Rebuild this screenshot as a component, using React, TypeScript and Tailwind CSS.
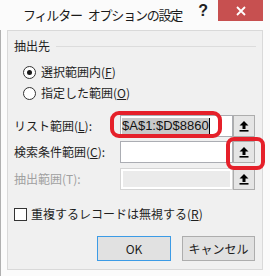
import React from 'react'

const jp = { fontFamily: '"Noto Sans CJK JP", "Noto Sans", sans-serif' }

function UpArrow() {
  return (
    <svg width="10" height="12" viewBox="0 0 10 12">
      <path d="M5 1 L9.5 5.5 L6.5 5.5 L6.5 9 L3.5 9 L3.5 5.5 L0.5 5.5 Z" fill="#000" />
      <rect x="0.5" y="10" width="9" height="1.6" fill="#000" />
    </svg>
  )
}

function RefButton() {
  return (
    <div className="w-[22px] h-[22px] border border-[#adadad] bg-[#e5e5e5] flex items-center justify-center shrink-0">
      <UpArrow />
    </div>
  )
}

function Radio({ checked, children }: { checked?: boolean; children: React.ReactNode }) {
  return (
    <div className="flex items-center h-[16px] pl-[9px]">
      <div className="w-[13px] h-[13px] rounded-full border border-[#333] bg-white flex items-center justify-center shrink-0">
        {checked && <div className="w-[5px] h-[5px] rounded-full bg-[#1a1a1a]" />}
      </div>
      <span className="ml-[5px] text-[12px] leading-[16px] text-[#1e1e1e]">{children}</span>
    </div>
  )
}

export default function App() {
  return (
    <div className="relative w-[270px] h-[276px] bg-[#fbfbfb] overflow-hidden" style={jp}>
      {/* Title bar */}
      <div className="flex items-start h-[30px]">
        <div className="pl-[23px] pt-[7px] flex text-[13px] leading-[16px] tracking-[-1.2px] text-[#1a1a1a]">
          <span>フィルター</span>
          <span className="ml-[6px]">オプションの設定</span>
        </div>
        <div className="ml-auto pt-[2px] mr-[10px] text-[16px] font-bold leading-[18px] text-[#222]" style={{ fontFamily: '"Liberation Sans", sans-serif' }}>
          ?
        </div>
        <div className="w-[45px] h-[21px] bg-[#c75050] mr-[7px] flex items-center justify-center">
          <svg width="10" height="10" viewBox="0 0 10 10">
            <path d="M1 1 L9 9 M9 1 L1 9" stroke="#fff" strokeWidth="1.8" />
          </svg>
        </div>
      </div>

      <div className="border-l border-[#b0b0b0] h-[246px] pl-[6px]">
        {/* Panel */}
        <div className="w-[256px] h-[240px] border border-[#d9d9d9] bg-[#f0f0f0] px-[6px] pt-[7px] flex flex-col text-[12px] text-[#1e1e1e]">
          <div className="flex items-center h-[16px]">
            <span className="leading-[16px]">抽出先</span>
            <div className="flex-1 h-px bg-[#dcdcdc] ml-[6px]" />
          </div>

          <div className="mt-[10px]">
            <Radio checked>
              選択範囲内(<span className="underline">F</span>)
            </Radio>
          </div>
          <div className="mt-[5px]">
            <Radio>
              指定した範囲(<span className="underline">O</span>)
            </Radio>
          </div>

          {/* List range */}
          <div className="mt-[14px] flex items-center h-[22px]">
            <span className="w-[106px] shrink-0 leading-[16px]">
              リスト範囲(<span className="underline">L</span>):
            </span>
            <div className="w-[113px] h-[22px] border border-[#abadb3] bg-white flex items-center pl-[1px]">
              <span
                className="bg-[#c8c8c8] text-[13px] leading-[16px] text-[#111]"
                style={{ fontFamily: '"Liberation Sans", Arial, sans-serif' }}
              >
                $A$1:$D$8860
              </span>
              <span className="w-px h-[16px] bg-black" />
            </div>
            <RefButton />
          </div>

          {/* Criteria range */}
          <div className="mt-[4px] flex items-center h-[22px]">
            <span className="w-[106px] shrink-0 leading-[16px]">
              検索条件範囲(<span className="underline">C</span>):
            </span>
            <div className="w-[113px] h-[22px] border border-[#abadb3] bg-white" />
            <RefButton />
          </div>

          {/* Extract range (disabled) */}
          <div className="mt-[5px] flex items-center h-[22px]">
            <span className="w-[106px] shrink-0 leading-[16px] text-[#a0a0a0]">抽出範囲(T):</span>
            <div className="w-[113px] h-[22px] border border-[#d5d5d5] bg-white p-[2px]">
              <div className="w-full h-full bg-[#ebebeb]" />
            </div>
            <RefButton />
          </div>

          {/* Unique checkbox */}
          <div className="mt-[16px] flex items-center h-[16px]">
            <div className="w-[13px] h-[13px] border border-[#333] bg-white shrink-0" />
            <span className="ml-[4px] leading-[16px]">
              重複するレコードは無視する(<span className="underline">R</span>)
            </span>
          </div>

          {/* Buttons */}
          <div className="mt-[14px] flex justify-end gap-[11px] mr-[1px]">
            <div className="w-[74px] h-[25px] border border-[#3c9be6] bg-[#e1e1e1] flex items-center justify-center leading-[16px]">
              OK
            </div>
            <div className="w-[73px] h-[25px] border border-[#adadad] bg-[#e1e1e1] flex items-center justify-center leading-[16px]">
              キャンセル
            </div>
          </div>
        </div>
      </div>

      {/* Red annotation marks */}
      <div className="absolute left-[110px] top-[111px] w-[112px] h-[27px] border-[4px] border-[#e5202a] rounded-[9px]" />
      <div className="absolute left-[226px] top-[137px] w-[39px] h-[33px] border-[4px] border-[#e5202a] rounded-[8px]" />
    </div>
  )
}
